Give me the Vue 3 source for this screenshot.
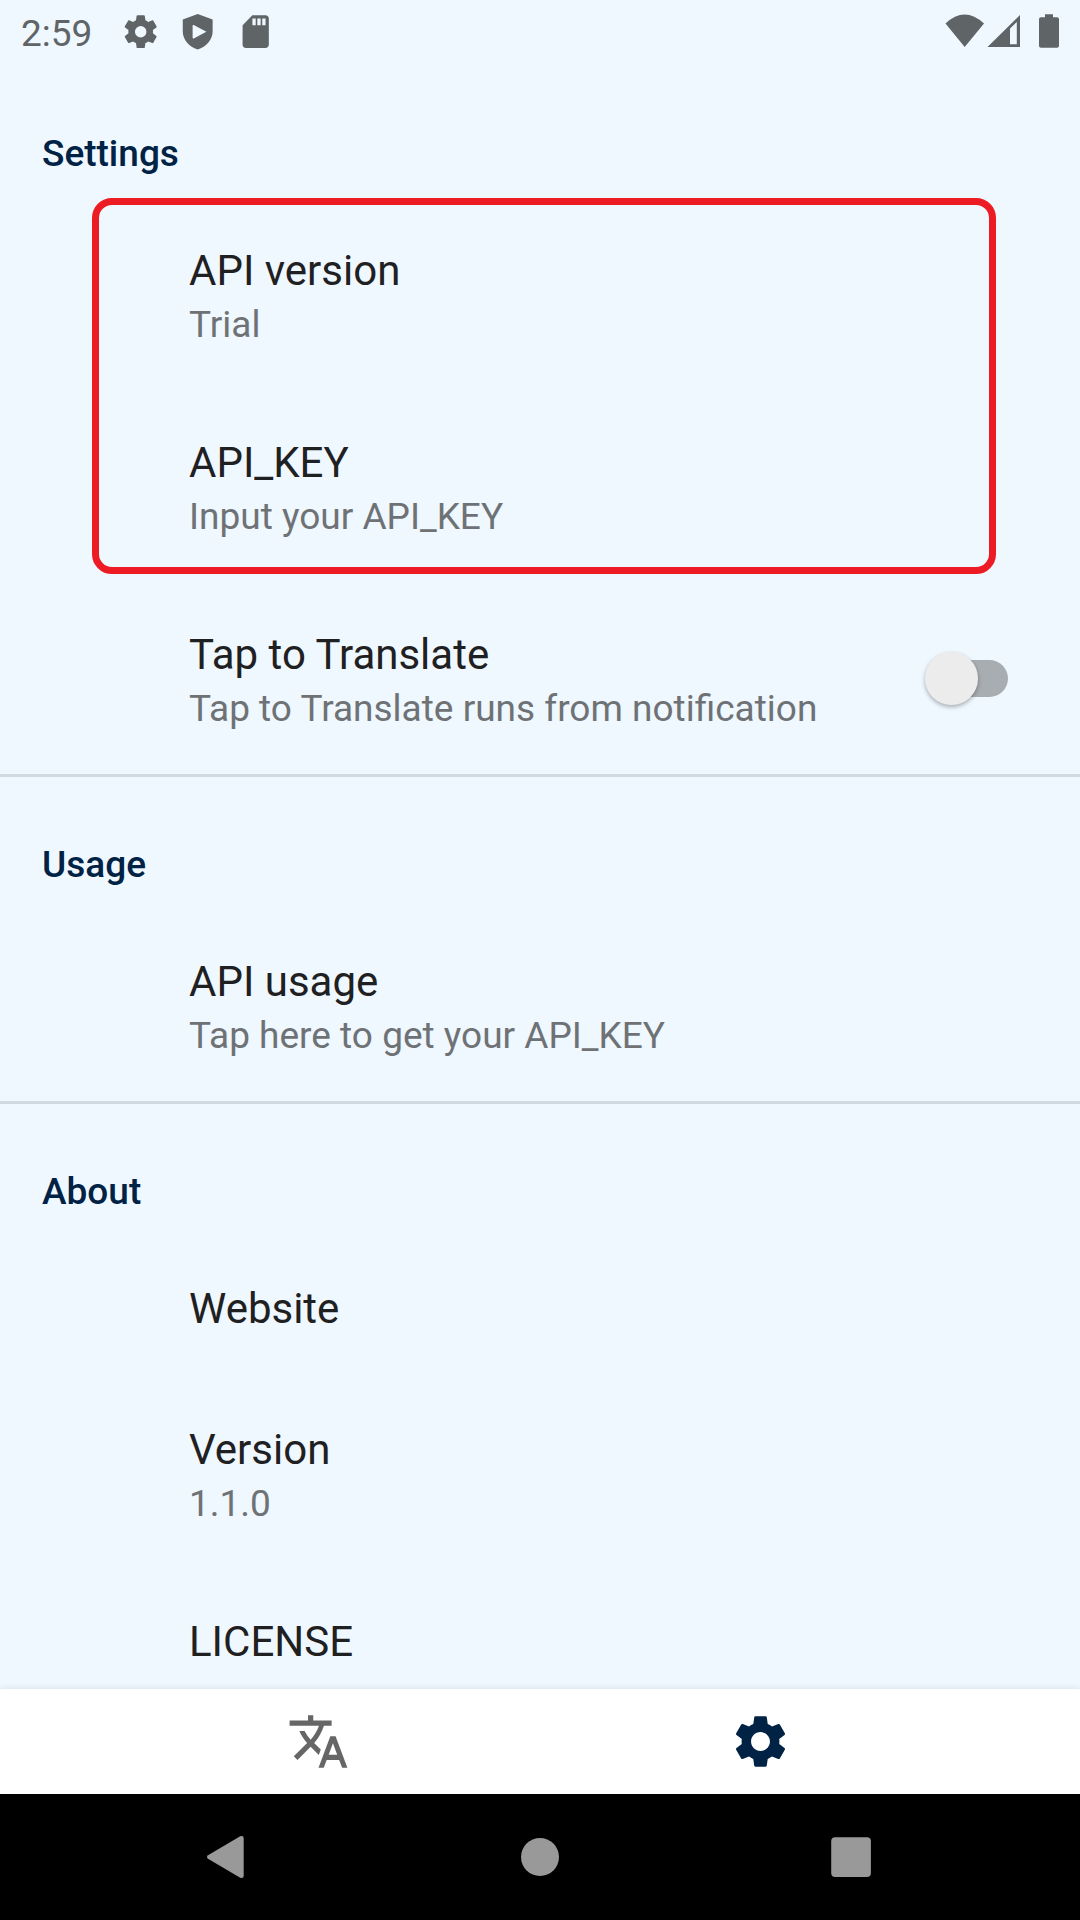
<script setup>
const sections = [
  {
    title: 'Settings',
    items: [
      { title: 'API version', summary: 'Trial' },
      { title: 'API_KEY', summary: 'Input your API_KEY' },
      { title: 'Tap to Translate', summary: 'Tap to Translate runs from notification', toggle: true }
    ]
  },
  {
    title: 'Usage',
    items: [{ title: 'API usage', summary: 'Tap here to get your API_KEY' }]
  },
  {
    title: 'About',
    items: [
      { title: 'Website' },
      { title: 'Version', summary: '1.1.0' },
      { title: 'LICENSE' }
    ]
  }
]
</script>

<template>
  <div class="screen">
    <header class="status">
      <span class="clock">2:59</span>
      <div class="notifications">
        <svg viewBox="0 0 24 24"><path d="M19.43 12.98c.04-.32.07-.64.07-.98s-.03-.66-.07-.98l2.11-1.65c.19-.15.24-.42.12-.64l-2-3.46c-.12-.22-.39-.3-.61-.22l-2.49 1c-.52-.4-1.08-.73-1.69-.98l-.38-2.65C14.46 2.18 14.25 2 14 2h-4c-.25 0-.46.18-.49.42l-.38 2.65c-.61.25-1.17.59-1.69.98l-2.49-1c-.23-.09-.49 0-.61.22l-2 3.46c-.13.22-.07.49.12.64l2.11 1.65c-.04.32-.07.65-.07.98s.03.66.07.98l-2.11 1.65c-.19.15-.24.42-.12.64l2 3.46c.12.22.39.3.61.22l2.49-1c.52.4 1.08.73 1.69.98l.38 2.65c.03.24.24.42.49.42h4c.25 0 .46-.18.49-.42l.38-2.65c.61-.25 1.17-.59 1.69-.98l2.49 1c.23.09.49 0 .61-.22l2-3.46c.12-.22.07-.49-.12-.64l-2.11-1.65zM12 15.5a3.5 3.5 0 1 1 0-7 3.5 3.5 0 0 1 0 7z" /></svg>
        <svg viewBox="0 0 24 24"><path fill-rule="evenodd" d="M12 1.2 2.9 4.6v7.3c0 4.9 3.8 9.5 9.1 10.9 5.3-1.4 9.1-6 9.1-10.9V4.6zM9.6 7.9l7.7 4.1-7.7 4.1q-.7.2-.7-.5V8.400q0-.7.7-.5z" /></svg>
        <svg viewBox="0 0 24 24"><path d="M18 2h-8L4.020 8 4 20c0 1.100.9 2 2 2h12c1.100 0 2-.9 2-2V4c0-1.100-.9-2-2-2zm-6 6h-2V4h2v4zm3 0h-2V4h2v4zm3 0h-2V4h2v4z" /></svg>
      </div>
      <svg class="system" viewBox="0 0 116 36">
        <path d="M0.500 9.500Q19.500-8.500 39 9.500L19.700 33z" />
        <path fill-rule="evenodd" d="M42.500 33 75 1v32zM65 14.500V30.200h6.800V8z" />
        <path d="M100 .300h8v3h4q2 0 2 2v26.500q0 2-2 2H96q-2 0-2-2V5.300q0-2 2-2h4z" />
      </svg>
    </header>

    <main class="content">
      <section v-for="section in sections" :key="section.title" class="section">
        <h2>{{ section.title }}</h2>
        <div v-for="item in section.items" :key="item.title" class="row">
          <div class="labels">
            <div class="title">{{ item.title }}</div>
            <div v-if="item.summary" class="summary">{{ item.summary }}</div>
          </div>
          <div v-if="item.toggle" class="switch"><div class="thumb"></div></div>
        </div>
      </section>
      <div class="highlight"></div>
    </main>

    <nav class="tabs">
      <div class="tab">
        <svg class="translate" viewBox="0 0 24 24" fill="#666"><path d="M12.870 15.070l-2.540-2.510.030-.030c1.740-1.940 2.980-4.170 3.710-6.530H17V4h-7V2H8v2H1v1.990h11.170C11.500 7.920 10.440 9.750 9 11.350 8.070 10.320 7.300 9.190 6.690 8h-2c.730 1.630 1.730 3.170 2.980 4.560l-5.090 5.020L4 19l5-5 3.110 3.110.760-2.040zM18.500 10h-2L12 22h2l1.120-3h4.750L21 22h2l-4.500-12zm-2.620 7l1.620-4.330L19.120 17h-3.240z" /></svg>
      </div>
      <div class="tab">
        <svg viewBox="0 0 24 24" fill="#024"><path d="M19.140,12.940c0.040-0.300,0.060-0.610,0.060-0.940c0-0.320-0.020-0.640-0.070-0.940l2.030-1.580c0.180-0.140,0.230-0.410,0.120-0.610l-1.920-3.320c-0.120-0.220-0.370-0.290-0.590-0.220l-2.390,0.960c-0.500-0.380-1.030-0.700-1.620-0.940L14.400,2.810c-0.040-0.240-0.240-0.410-0.480-0.410h-3.840c-0.240,0-0.430,0.170-0.470,0.410L9.250,5.350C8.660,5.590,8.120,5.920,7.630,6.290L5.240,5.330c-0.220-0.080-0.470,0-0.590,0.220L2.740,8.870C2.620,9.080,2.660,9.340,2.860,9.480l2.030,1.580C4.840,11.360,4.800,11.690,4.800,12s0.020,0.640,0.070,0.940l-2.030,1.580c-0.180,0.140-0.230,0.410-0.120,0.610l1.920,3.320c0.120,0.220,0.370,0.290,0.590,0.220l2.390-0.960c0.500,0.380,1.030,0.700,1.620,0.940l0.360,2.540c0.050,0.240,0.240,0.410,0.480,0.410h3.840c0.240,0,0.440-0.170,0.470-0.410l0.360-2.540c0.590-0.240,1.130-0.560,1.620-0.940l2.390,0.960c0.220,0.080,0.470,0,0.590-0.220l1.920-3.320c0.120-0.220,0.070-0.470-0.120-0.610L19.140,12.940z M12,15.600c-1.980,0-3.600-1.620-3.600-3.600s1.620-3.600,3.600-3.600s3.600,1.620,3.600,3.600S13.980,15.600,12,15.600z" /></svg>
      </div>
    </nav>

    <footer class="keys">
      <svg viewBox="0 0 42 42"><path d="M37.700 0Q39.700 0 39.700 2V40Q39.700 42 37.700 42L36.200 41.800 4 22.800Q2 21 4 19.200L36.200 .300z" /></svg>
      <svg viewBox="0 0 42 42"><circle cx="21" cy="21" r="19" /></svg>
      <svg viewBox="0 0 42 42"><rect x="1.200" y="1.200" width="39.700" height="39.700" rx="4" /></svg>
    </footer>
  </div>
</template>

<style>
body {
  margin: 0;
}
</style>

<style scoped>
.screen {
  width: 1080px;
  height: 1920px;
  display: flex;
  flex-direction: column;
  overflow: hidden;
  background: #eff7ff;
  font-family: Roboto, sans-serif;
}
.status {
  height: 63px;
  flex: none;
  display: flex;
  align-items: center;
  box-sizing: border-box;
  padding: 0 19px 0 21px;
  color: #5f6467;
  fill: #5f6467;
}
.clock {
  width: 99.500px;
  font-size: 37px;
  line-height: 43px;
  padding-top: 3px;
}
.notifications {
  display: flex;
  gap: 18.600px;
}
.notifications svg {
  width: 39.400px;
  height: 39.400px;
  display: block;
}
.system {
  width: 116px;
  height: 36px;
  margin-left: auto;
}
.content {
  position: relative;
  flex: 1;
  min-height: 0;
  overflow: hidden;
}
.section {
  border-top: 3px solid #d2dae1;
}
.section:first-child {
  border-top-color: transparent;
}
h2 {
  height: 66px;
  margin: 0;
  padding: 66px 0 0 42px;
  font-size: 37px;
  line-height: 43px;
  font-weight: 500;
  color: #002244;
}
.row {
  display: flex;
  align-items: center;
  justify-content: space-between;
  padding: 44px 72px 40px 189px;
}
.title {
  font-size: 42px;
  line-height: 57px;
  color: #1f2021;
}
.summary {
  font-size: 37px;
  line-height: 51px;
  color: #6e7275;
}
.switch {
  width: 75px;
  height: 37px;
  border-radius: 19px;
  background: #a8adb2;
  display: flex;
  align-items: center;
  margin-top: -3px;
}
.thumb {
  width: 52.500px;
  height: 52.500px;
  flex: none;
  margin-left: -8px;
  border-radius: 50%;
  background: #ececec;
  box-shadow: 0 2px 4px rgba(0, 0, 0, 0.300);
}
.highlight {
  position: absolute;
  left: 92px;
  top: 135px;
  width: 904px;
  height: 376px;
  box-sizing: border-box;
  border: 7px solid #ed1c24;
  border-radius: 20px;
}
.tabs {
  position: relative;
  height: 105px;
  flex: none;
  display: flex;
  justify-content: center;
  background: #fff;
  box-shadow: 0 0 8px rgba(0, 0, 0, 0.100);
}
.tab {
  width: 441px;
  display: flex;
  align-items: center;
  justify-content: center;
}
.tab svg {
  width: 63px;
  height: 63px;
}
.tab .translate {
  margin-right: 2px;
}
.keys {
  position: relative;
  height: 126px;
  flex: none;
  display: flex;
  align-items: center;
  box-sizing: border-box;
  padding-left: 204px;
  background: #000;
  fill: #999;
}
.keys svg {
  width: 42px;
  height: 42px;
}
.keys svg:nth-child(2) {
  margin: 0 269px 0 273px;
}
</style>
